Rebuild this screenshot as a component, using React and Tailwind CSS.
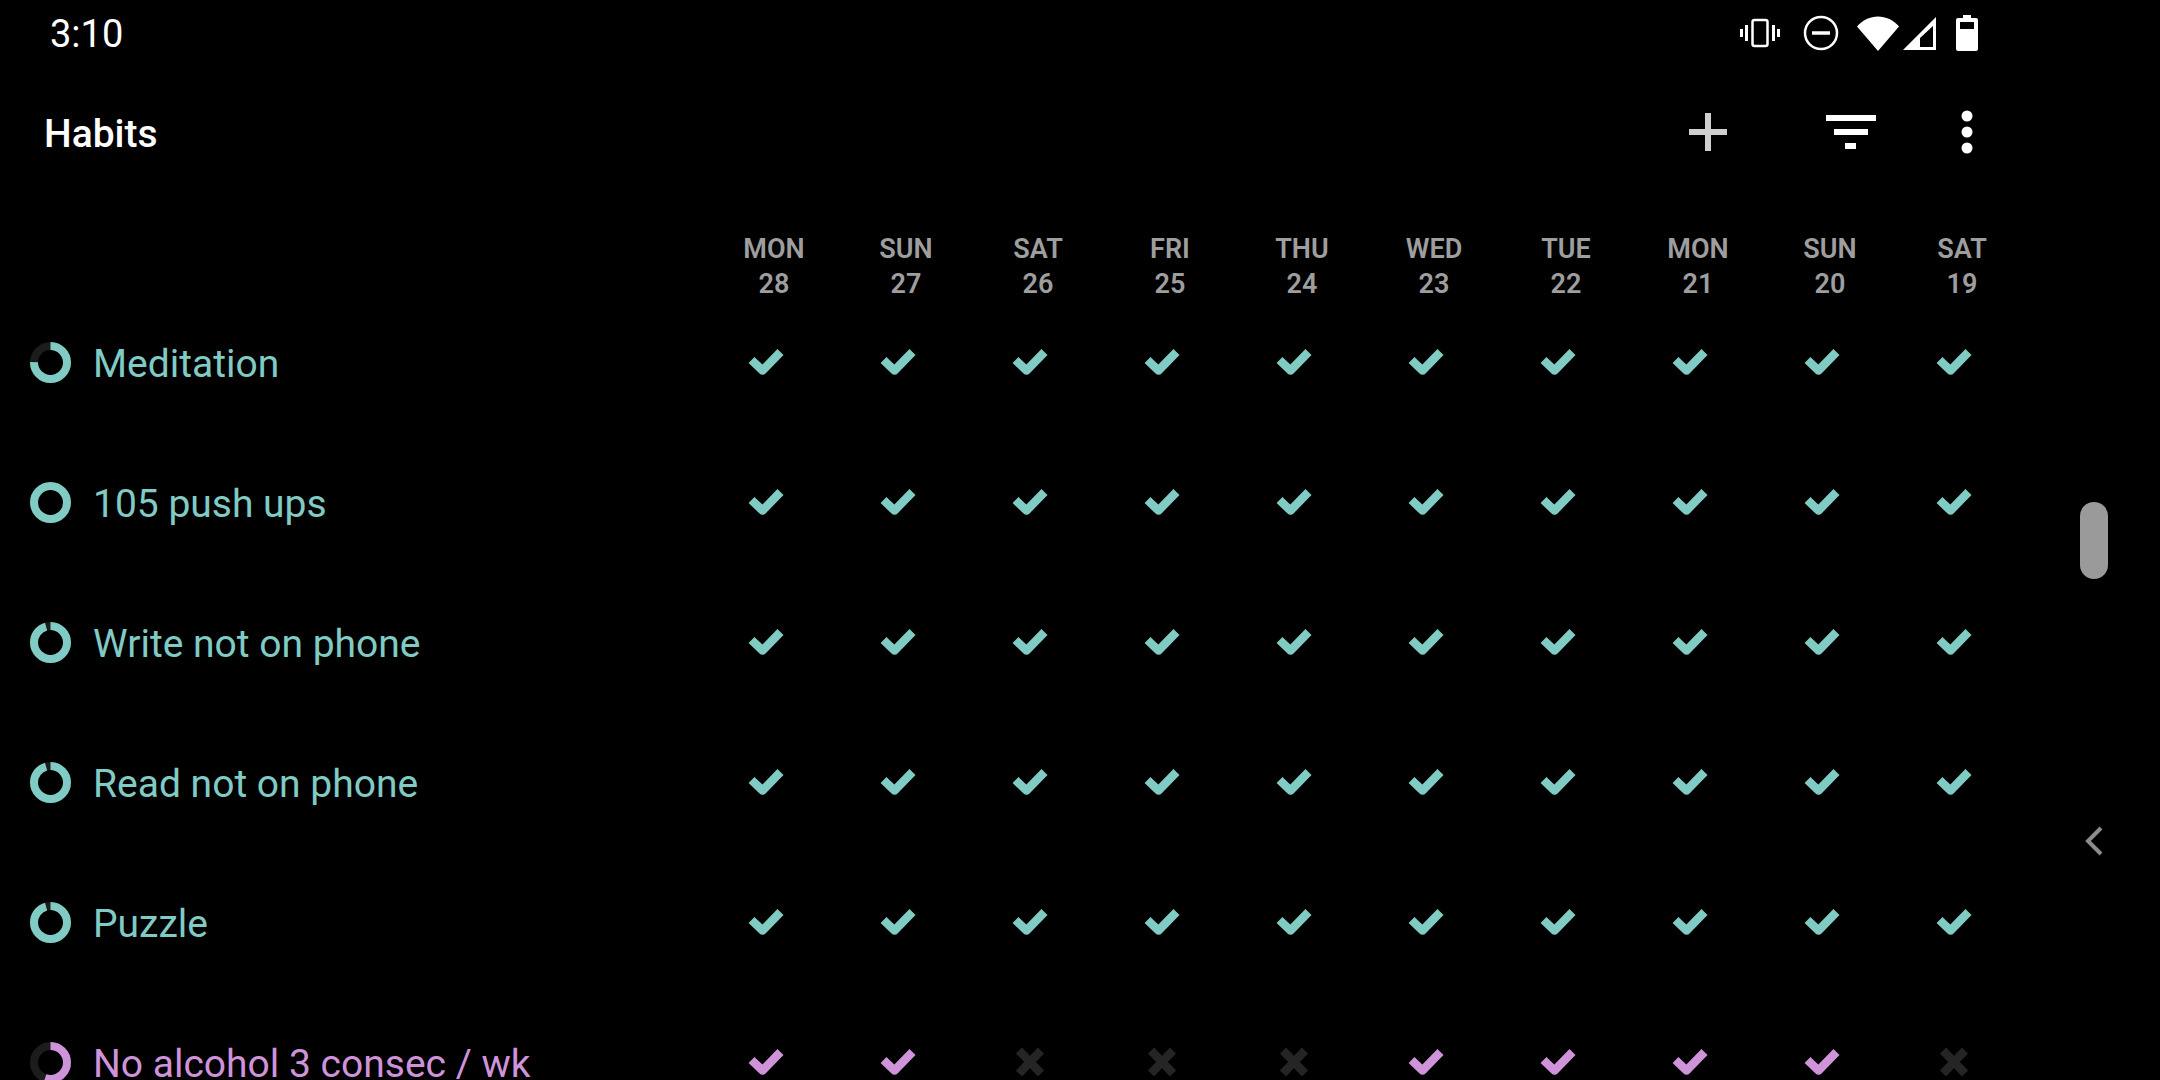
const days = [
  ["MON", 28], ["SUN", 27], ["SAT", 26], ["FRI", 25], ["THU", 24],
  ["WED", 23], ["TUE", 22], ["MON", 21], ["SUN", 20], ["SAT", 19],
];

const TEAL = "#80cbc4";
const PURPLE = "#ce93d8";
const ALL = [1, 1, 1, 1, 1, 1, 1, 1, 1, 1];

const habits = [
  { name: "Meditation", color: TEAL, score: 0.75, marks: ALL },
  { name: "105 push ups", color: TEAL, score: 1, marks: ALL },
  { name: "Write not on phone", color: TEAL, score: 0.95, marks: ALL },
  { name: "Read not on phone", color: TEAL, score: 0.95, marks: ALL },
  { name: "Puzzle", color: TEAL, score: 0.95, marks: ALL },
  { name: "No alcohol 3 consec / wk", color: PURPLE, score: 0.55, marks: [1, 1, 0, 0, 0, 1, 1, 1, 1, 0] },
];

function Ring({ color, score }) {
  const r = 16.5;
  const c = 2 * Math.PI * r;
  return (
    <svg width="41" height="41" viewBox="0 0 41 41" className="shrink-0">
      <circle cx="20.5" cy="20.5" r={r} fill="none" stroke="#1c1c1c" strokeWidth="8" />
      <circle
        cx="20.5"
        cy="20.5"
        r={r}
        fill="none"
        stroke={color}
        strokeWidth="8"
        strokeDasharray={`${c * score} ${c}`}
        transform="rotate(-90 20.5 20.5)"
      />
    </svg>
  );
}

function Check({ color }) {
  return (
    <svg width="36" height="28" viewBox="0 0 36 28">
      <polyline points="3.5,12 14.5,22.5 32.5,4" fill="none" stroke={color} strokeWidth="8.5" strokeLinecap="butt" strokeLinejoin="round" />
    </svg>
  );
}

function Cross() {
  return (
    <svg width="36" height="28" viewBox="0 0 36 28">
      <path d="M7 2.5 L29 25.5 M29 2.5 L7 25.5" fill="none" stroke="#252525" strokeWidth="8.5" />
    </svg>
  );
}

function StatusIcons() {
  return (
    <div className="flex items-center">
      {/* vibrate */}
      <svg width="40" height="30" viewBox="0 0 40 30" className="mr-[23px]" fill="none" stroke="#fff">
        <rect x="12.5" y="2" width="15" height="26" rx="2" strokeWidth="2.5" />
        <path d="M6.5 7v16M33.5 7v16" strokeWidth="3" />
        <path d="M1.5 11v8M38.5 11v8" strokeWidth="3" />
      </svg>
      {/* do not disturb */}
      <svg width="36" height="36" viewBox="0 0 36 36" className="mr-[18px]" fill="none" stroke="#fff">
        <circle cx="18" cy="18" r="16" strokeWidth="2.5" />
        <path d="M9 18h18" strokeWidth="3.5" />
      </svg>
      {/* wifi */}
      <svg width="42" height="35" viewBox="0 0 42 35" className="mr-[3px]">
        <path d="M0 10.5 C11 -3 31 -3 42 10.5 L21 35 Z" fill="#fff" />
      </svg>
      {/* signal */}
      <svg width="35" height="35" viewBox="0 0 35 35" className="mr-[19px]">
        <path d="M34 1 V34 H1 Z M31 10 L18 22 V31 H31 Z" fill="#fff" fillRule="evenodd" />
      </svg>
      {/* battery */}
      <svg width="22" height="36" viewBox="0 0 22 36">
        <path
          d="M7 0h8v3h5a2 2 0 0 1 2 2v29a2 2 0 0 1-2 2H2a2 2 0 0 1-2-2V5a2 2 0 0 1 2-2h5z M4 7v7h14V7z"
          fill="#fff"
          fillRule="evenodd"
        />
      </svg>
    </div>
  );
}

function ToolbarActions() {
  return (
    <div className="flex items-center">
      <svg width="40" height="40" viewBox="0 0 40 40" className="mr-[98px]" fill="none" stroke="#cfcfcf" strokeWidth="6">
        <path d="M20 1v38M1 20h38" />
      </svg>
      <svg width="50" height="34" viewBox="0 0 50 34" className="mr-[85px]" fill="#fff">
        <rect x="0" y="0" width="50" height="6" />
        <rect x="8" y="14" width="34" height="6" />
        <rect x="19" y="28" width="11" height="6" />
      </svg>
      <svg width="12" height="44" viewBox="0 0 12 44" fill="#fff">
        <circle cx="6" cy="6" r="5.5" />
        <circle cx="6" cy="22" r="5.5" />
        <circle cx="6" cy="38" r="5.5" />
      </svg>
    </div>
  );
}

export default function App() {
  return (
    <div
      className="relative w-[2160px] h-[1080px] bg-black overflow-hidden flex flex-col"
      style={{ fontFamily: "Roboto, sans-serif" }}
    >
      {/* status bar */}
      <div className="h-[66px] flex items-center justify-between pl-[50px] pr-[182px] shrink-0">
        <span className="text-[38px] leading-none text-white mt-[2px]">3:10</span>
        <StatusIcons />
      </div>

      {/* toolbar */}
      <div className="h-[132px] flex items-center justify-between pl-[44px] pr-[187px] shrink-0">
        <span className="text-[39px] leading-none font-medium text-white mt-[5px]">Habits</span>
        <ToolbarActions />
      </div>

      {/* day header */}
      <div className="h-[104px] pt-[34px] pl-[708px] flex shrink-0">
        {days.map(([d, n], i) => (
          <div key={i} className="w-[132px] flex flex-col items-center text-[27px] leading-[35px] font-semibold text-[#9e9e9e]">
            <span>{d}</span>
            <span>{n}</span>
          </div>
        ))}
      </div>

      {/* habit rows */}
      {habits.map((h) => (
        <div key={h.name} className="h-[140px] pb-[20px] flex items-center shrink-0">
          <div className="w-[708px] pl-[30px] flex items-center gap-[22px]">
            <Ring color={h.color} score={h.score} />
            <span className="text-[39px] leading-none mt-[5px]" style={{ color: h.color }}>{h.name}</span>
          </div>
          {h.marks.map((m, i) => (
            <div key={i} className="w-[132px] flex justify-center pr-[16px]">
              {m ? <Check color={h.color} /> : <Cross />}
            </div>
          ))}
        </div>
      ))}

      {/* scroll thumb */}
      <div className="absolute left-[2080px] top-[502px] w-[28px] h-[77px] rounded-full bg-[#9a9a9a]" />

      {/* side panel handle */}
      <svg width="20" height="30" viewBox="0 0 20 30" className="absolute left-[2084px] top-[826px]" fill="none" stroke="#8c8c8c" strokeWidth="4">
        <path d="M17 2 L4 15 L17 28" />
      </svg>
    </div>
  );
}
